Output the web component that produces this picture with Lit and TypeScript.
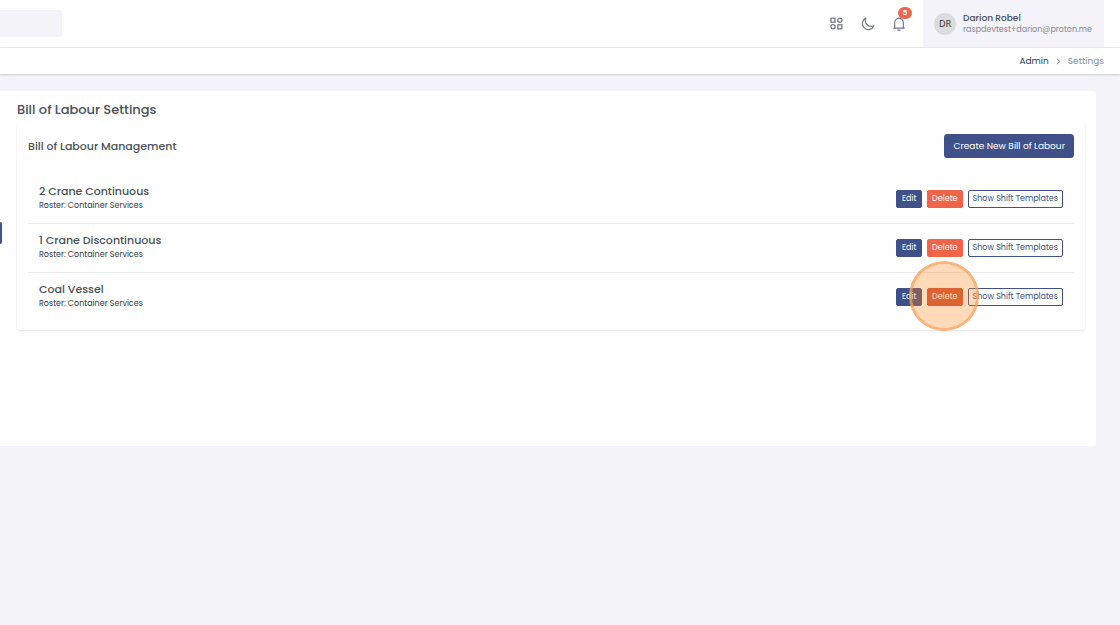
import { LitElement, html, css } from "lit";
import { customElement, property, state } from "lit/decorators.js";

interface Bill {
  name: string;
  roster: string;
}

@customElement("top-header")
export class TopHeader extends LitElement {
  static styles = css`
    :host {
      display: block;
      background: #fff;
      border-bottom: 1px solid #e9ebec;
    }
    .bar {
      display: flex;
      align-items: stretch;
      justify-content: space-between;
      height: 47px;
      padding-right: 16px;
    }
    .search {
      align-self: center;
      box-sizing: border-box;
      width: 62px;
      height: 27px;
      padding: 0 8px;
      border: 0;
      border-radius: 0 3px 3px 0;
      background: #f3f3f9;
      font: inherit;
    }
    .tools {
      display: flex;
      align-items: center;
    }
    .icon {
      position: relative;
      display: grid;
      place-items: center;
      width: 31px;
      height: 31px;
      padding: 0;
      border: 0;
      background: none;
      color: #74788d;
    }
    .icon svg {
      display: block;
    }
    .badge {
      position: absolute;
      top: -1px;
      right: 2px;
      width: 14px;
      height: 12px;
      border-radius: 6px;
      background: #ec6550;
      color: #fff;
      font-size: 8px;
      font-weight: 600;
      line-height: 12px;
      text-align: center;
    }
    .user {
      display: flex;
      align-items: center;
      align-self: stretch;
      gap: 7px;
      height: 47px;
      margin-left: 9px;
      padding: 0 12px 0 11px;
      border: 0;
      background: #f3f3f9;
      font: inherit;
      text-align: left;
    }
    .avatar {
      width: 22px;
      height: 22px;
      border-radius: 50%;
      background: #dcdcdc;
      color: #333;
      font-family: "Noto Sans", sans-serif;
      font-size: 9px;
      line-height: 22px;
      text-align: center;
    }
    .who {
      display: block;
      line-height: 12px;
    }
    .name {
      display: block;
      color: #495057;
      font-size: 9px;
      font-weight: 500;
    }
    .mail {
      display: block;
      color: #878a99;
      font-size: 8px;
    }
  `;

  render() {
    return html`
      <header class="bar">
        <input class="search" type="search" aria-label="Search" />
        <div class="tools">
          <button class="icon" aria-label="Apps">
            <svg width="13" height="13" viewBox="0 0 13 13" fill="none" stroke="currentColor" stroke-width="1.3">
              <rect x="1" y="1.2" width="4" height="4" />
              <circle cx="9.9" cy="3.2" r="2.1" />
              <circle cx="3" cy="9.8" r="2.1" />
              <rect x="7.9" y="7.8" width="4" height="4" />
            </svg>
          </button>
          <button class="icon" aria-label="Dark mode">
            <svg width="14" height="14" viewBox="0 0 14 14" fill="none" stroke="currentColor" stroke-width="1.2" stroke-linejoin="round">
              <path d="M4.8 1.1A6 6 0 1 0 12.9 8.8A6 6 0 0 1 4.8 1.1Z" />
            </svg>
          </button>
          <button class="icon" aria-label="Notifications">
            <svg width="14" height="14" viewBox="0 0 14 14" fill="none" stroke="currentColor" stroke-width="1.2" stroke-linejoin="round">
              <path d="M1.3 11.1H12.7M2.7 11V5.7a4.3 4.3 0 0 1 8.6 0V11M7 0.3V1.4M5.3 13.2H8.7" />
            </svg>
            <span class="badge">5</span>
          </button>
          <button class="user">
            <span class="avatar">DR</span>
            <span class="who">
              <span class="name">Darion Robel</span>
              <span class="mail">raspdevtest+darion@proton.me</span>
            </span>
          </button>
        </div>
      </header>
    `;
  }
}

@customElement("crumb-trail")
export class CrumbTrail extends LitElement {
  static styles = css`
    :host {
      display: block;
      background: #fff;
      box-shadow: 0 1px 2px rgba(56, 65, 74, 0.2);
    }
    .trail {
      display: flex;
      align-items: center;
      justify-content: flex-end;
      gap: 7px;
      height: 26px;
      padding-right: 16px;
      font-size: 9px;
      color: #878a99;
    }
    .link {
      color: #343a40;
      text-decoration: none;
    }
  `;

  render() {
    return html`
      <nav class="trail" aria-label="Breadcrumb">
        <a class="link" href="#admin">Admin</a>
        <svg width="5" height="7" viewBox="0 0 5 7" fill="none" stroke="#6c7080" stroke-width="1">
          <path d="M1 0.8L3.8 3.5L1 6.2" />
        </svg>
        <span>Settings</span>
      </nav>
    `;
  }
}

@customElement("bill-row")
export class BillRow extends LitElement {
  static styles = css`
    :host {
      display: block;
    }
    .row {
      display: flex;
      align-items: center;
      justify-content: space-between;
      padding: 0 11px;
    }
    .text {
      padding: 8px 0 11px;
    }
    .title {
      margin: 0;
      color: #495057;
      font-size: 11px;
      font-weight: 500;
      line-height: 16px;
    }
    .roster {
      margin: 0;
      color: #343a40;
      font-size: 8px;
      line-height: 13px;
    }
    .actions {
      display: flex;
      gap: 5px;
    }
    .btn {
      min-width: 26px;
      height: 18px;
      padding: 0 4px;
      border: 1px solid #405189;
      border-radius: 2px;
      background: #405189;
      color: #fff;
      font: inherit;
      font-size: 8px;
      line-height: 16px;
      white-space: nowrap;
    }
    .danger {
      border-color: #f06548;
      background: #f06548;
    }
    .danger.pressed {
      border-color: #cc563d;
      background: #cc563d;
    }
    .outline {
      background: #fff;
      color: #405189;
    }
    .spot {
      position: relative;
      display: flex;
    }
    .ring {
      position: absolute;
      top: 50%;
      left: 50%;
      box-sizing: border-box;
      width: 70px;
      height: 70px;
      margin: -36px 0 0 -36px;
      border: 3px solid rgba(249, 160, 88, 0.8);
      border-radius: 50%;
      background: rgba(255, 133, 27, 0.31);
      background-clip: padding-box;
      pointer-events: none;
      z-index: 1;
    }
  `;

  @property({ attribute: false }) bill!: Bill;
  @property({ type: Boolean }) highlighted = false;

  render() {
    return html`
      <div class="row">
        <div class="text">
          <h3 class="title">${this.bill.name}</h3>
          <p class="roster">Roster: ${this.bill.roster}</p>
        </div>
        <div class="actions">
          <button class="btn">Edit</button>
          <div class="spot">
            <button class="btn danger ${this.highlighted ? "pressed" : ""}">Delete</button>
            ${this.highlighted ? html`<span class="ring"></span>` : null}
          </div>
          <button class="btn outline">Show Shift Templates</button>
        </div>
      </div>
    `;
  }
}

@customElement("app-root")
export class AppRoot extends LitElement {
  static styles = css`
    :host {
      display: block;
      min-height: 100vh;
      background: #f3f3f9;
      color: #495057;
      font-family: Poppins, Inter, sans-serif;
    }
    .main {
      position: relative;
      padding: 17px 24px 0 0;
    }
    .handle {
      position: absolute;
      top: 148px;
      left: 0;
      width: 2px;
      height: 22px;
      padding: 0;
      border: 0;
      border-radius: 0 2px 2px 0;
      background: #405189;
    }
    .panel {
      box-sizing: border-box;
      min-height: 355px;
      padding: 9px 11px 11px 17px;
      border-radius: 0 3px 3px 0;
      background: #fff;
    }
    .heading {
      margin: 0 0 2px;
      font-size: 13px;
      font-weight: 500;
      line-height: 20px;
    }
    .card {
      padding: 12px 11px 9px;
      border-radius: 3px;
      box-shadow: 0 1px 2px rgba(56, 65, 74, 0.15);
    }
    .head {
      display: flex;
      align-items: center;
      justify-content: space-between;
      margin-bottom: 17px;
    }
    .subheading {
      margin: 0;
      font-size: 11px;
      font-weight: 500;
      line-height: 16px;
    }
    .create {
      height: 24px;
      padding: 0 8px;
      border: 1px solid #405189;
      border-radius: 3px;
      background: #405189;
      color: #fff;
      font: inherit;
      font-size: 9px;
    }
    .list {
      margin: 0;
      padding: 0;
      list-style: none;
    }
    .item + .item {
      border-top: 1px solid #e9ebec;
    }
  `;

  @state() private bills: Bill[] = [
    { name: "2 Crane Continuous", roster: "Container Services" },
    { name: "1 Crane Discontinuous", roster: "Container Services" },
    { name: "Coal Vessel", roster: "Container Services" },
  ];

  render() {
    return html`
      <top-header></top-header>
      <crumb-trail></crumb-trail>
      <main class="main">
        <section class="panel">
          <h1 class="heading">Bill of Labour Settings</h1>
          <div class="card">
            <div class="head">
              <h2 class="subheading">Bill of Labour Management</h2>
              <button class="create">Create New Bill of Labour</button>
            </div>
            <ul class="list">
              ${this.bills.map(
                (bill, i) => html`
                  <li class="item">
                    <bill-row .bill=${bill} ?highlighted=${i === this.bills.length - 1}></bill-row>
                  </li>
                `
              )}
            </ul>
          </div>
        </section>
        <button class="handle" aria-label="Open side panel"></button>
      </main>
    `;
  }
}
